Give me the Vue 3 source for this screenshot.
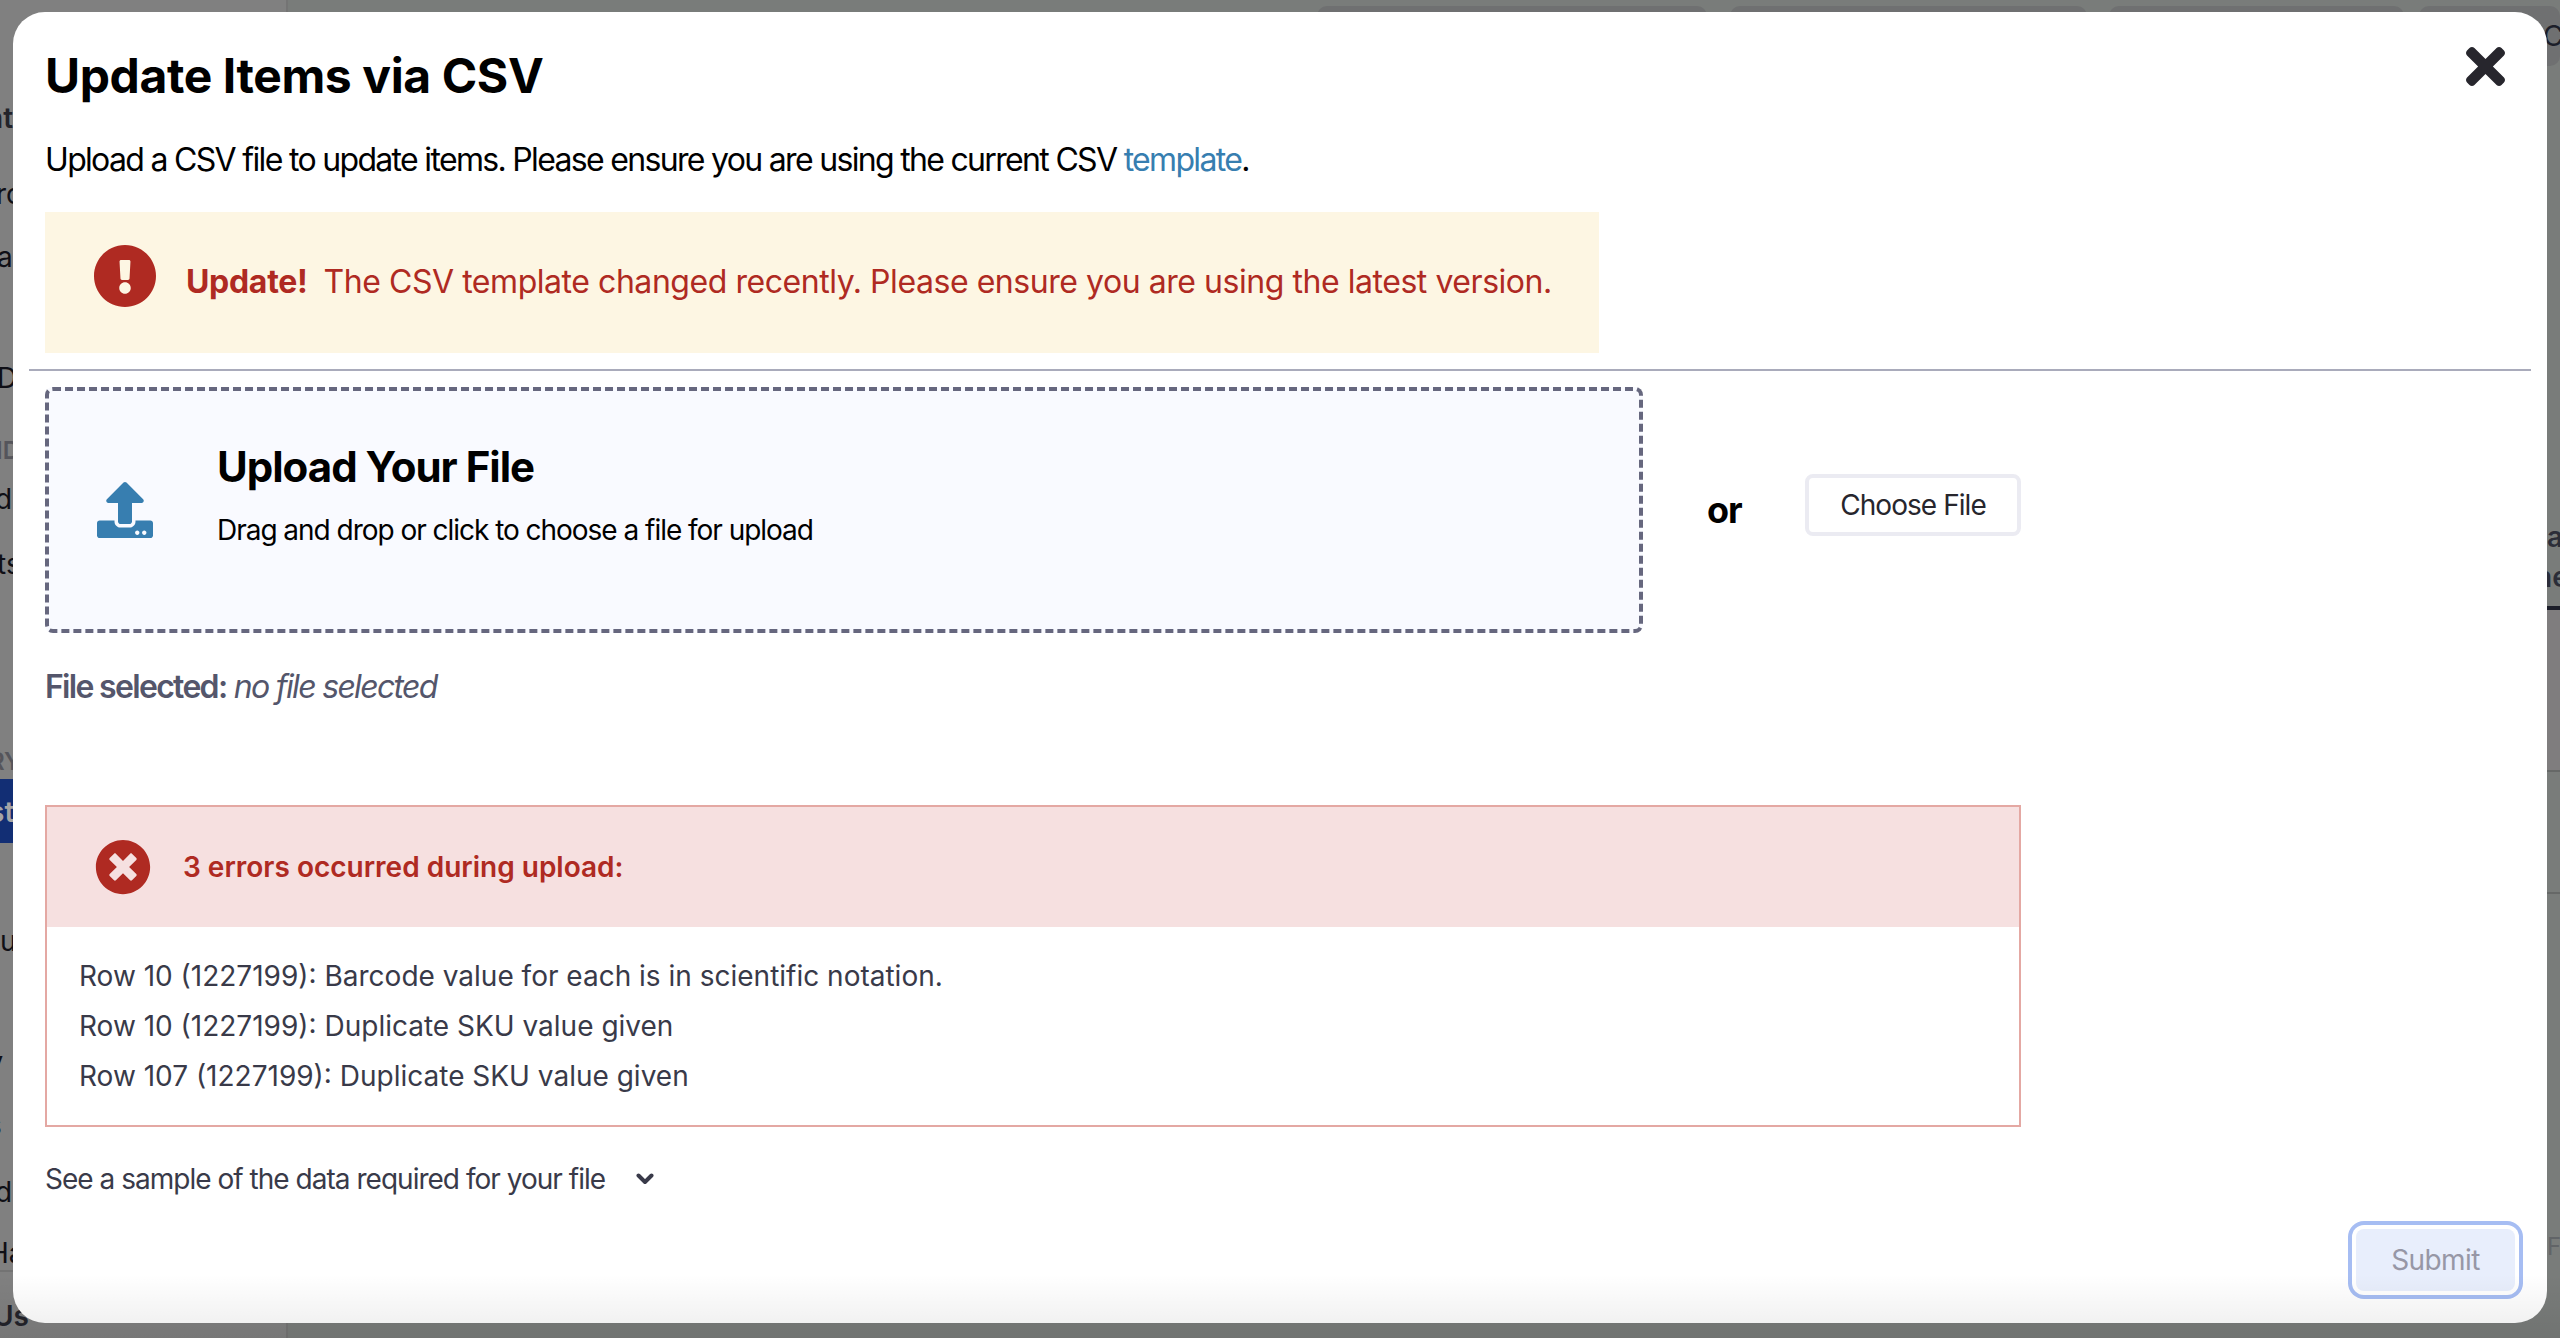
<script setup>
import { ref } from 'vue'

const errors = ref([
  'Row 10 (1227199): Barcode value for each is in scientific notation.',
  'Row 10 (1227199): Duplicate SKU value given',
  'Row 107 (1227199): Duplicate SKU value given'
])

// Sidebar entries behind the dialog: h = row height, x = left shift of the label
const nav = [
  { t: 'nt', h: 135, x: -14, c: 'head' },
  { t: 'ro', h: 76, x: -4 },
  { t: 'a', h: 63, x: -3 },
  { t: 'D', h: 121, x: -3 },
  { t: 'ID', h: 73, x: -4, c: 'group' },
  { t: 'd', h: 48, x: -5 },
  { t: 'ts', h: 65, x: -3 },
  { t: 'RY', h: 198, x: -11, c: 'group' },
  { t: 'st', h: 64, x: -11, c: 'active' },
  { t: 'u', h: 115, x: 0 },
  { t: 'y', h: 121, x: -12.5 },
  { t: 's', h: 63, x: -13 },
  { t: 'd', h: 67, x: -5 },
  { t: 'Ha', h: 63, x: -12, c: 'last' },
  { t: 'Us', h: 61, x: -7, c: 'user' }
]
</script>

<template>
  <div class="screen">
    <div class="backdrop">
      <aside class="sidebar">
        <div v-for="(n, i) in nav" :key="i" class="nav" :class="n.c" :style="{ height: n.h + 'px' }">
          <span :style="{ marginLeft: n.x + 'px' }">{{ n.t }}</span>
        </div>
      </aside>
      <div class="page">
        <div class="toolbar">
          <i class="chip c1"></i><i class="chip c2"></i><i class="chip c3"></i><i class="chip c4">C</i>
        </div>
        <div class="grid">
          <div class="cell th">a<br /><span>ne</span></div>
          <div class="cell r1"></div>
          <div class="cell r2"></div>
          <div class="cell foot">F</div>
        </div>
      </div>
    </div>

    <div class="overlay">
      <section class="modal">
        <button class="close" aria-label="Close">
          <svg viewBox="0 0 352 512"><path d="M242.72 256l100.07-100.07c12.28-12.28 12.28-32.19 0-44.48l-22.24-22.24c-12.28-12.28-32.19-12.28-44.48 0L176 189.28 75.93 89.21c-12.28-12.28-32.19-12.28-44.48 0L9.21 111.45c-12.28 12.28-12.28 32.19 0 44.48L109.28 256 9.21 356.07c-12.28 12.28-12.28 32.19 0 44.48l22.24 22.24c12.28 12.28 32.2 12.28 44.48 0L176 322.72l100.07 100.07c12.28 12.28 32.2 12.28 44.48 0l22.24-22.24c12.28-12.28 12.28-32.19 0-44.48L242.72 256z" /></svg>
        </button>
        <h1>Update Items via CSV</h1>
        <p class="intro">Upload a CSV file to update items. Please ensure you are using the current CSV <a>template</a>.</p>

        <div class="notice">
          <svg viewBox="0 0 512 512"><path d="M504 256c0 136.997-111.043 248-248 248S8 392.997 8 256C8 119.083 119.043 8 256 8s248 111.083 248 248zm-248 50c-25.405 0-46 20.595-46 46s20.595 46 46 46 46-20.595 46-46-20.595-46-46-46zm-43.673-165.346l7.418 136c.347 6.364 5.609 11.346 11.982 11.346h48.546c6.373 0 11.635-4.982 11.982-11.346l7.418-136c.375-6.874-5.098-12.654-11.982-12.654h-63.383c-6.884 0-12.356 5.78-11.981 12.654z" /></svg>
          <strong>Update!</strong>
          <span>The CSV template changed recently. Please ensure you are using the latest version.</span>
        </div>
        <hr />

        <div class="pick">
          <div class="drop">
            <svg viewBox="0 0 512 512"><path d="M296 384h-80c-13.3 0-24-10.7-24-24V192h-87.7c-17.8 0-26.7-21.5-14.1-34.1L242.3 5.7c7.5-7.5 19.8-7.5 27.3 0l152.2 152.2c12.6 12.6 3.7 34.1-14.1 34.1H320v168c0 13.3-10.7 24-24 24zm216-8v112c0 13.3-10.7 24-24 24H24c-13.3 0-24-10.7-24-24V376c0-13.3 10.7-24 24-24h136v8c0 30.9 25.1 56 56 56h80c30.9 0 56-25.1 56-56v-8h136c13.3 0 24 10.7 24 24zm-124 88c0-11-9-20-20-20s-20 9-20 20 9 20 20 20 20-9 20-20zm64 0c0-11-9-20-20-20s-20 9-20 20 9 20 20 20 20-9 20-20z" /></svg>
            <div>
              <h2>Upload Your File</h2>
              <p>Drag and drop or click to choose a file for upload</p>
            </div>
          </div>
          <span class="or">or</span>
          <button class="choose">Choose File</button>
        </div>
        <p class="selected"><b>File selected:</b> <em>no file selected</em></p>

        <div class="errors">
          <header>
            <svg viewBox="0 0 512 512"><path d="M256 8C119 8 8 119 8 256s111 248 248 248 248-111 248-248S393 8 256 8zm121.600 313.100c4.700 4.700 4.700 12.300 0 17L338 377.600c-4.700 4.700-12.300 4.700-17 0L256 312l-65.100 65.600c-4.700 4.700-12.300 4.700-17 0L134.400 338c-4.700-4.700-4.700-12.300 0-17l65.600-65-65.600-65.100c-4.700-4.700-4.700-12.300 0-17l39.600-39.600c4.700-4.700 12.300-4.700 17 0l65 65.700 65.100-65.600c4.700-4.700 12.300-4.700 17 0l39.600 39.600c4.700 4.700 4.700 12.300 0 17L312 256l65.600 65.100z" /></svg>
            <span>3 errors occurred during upload:</span>
          </header>
          <ul>
            <li v-for="e in errors" :key="e">{{ e }}</li>
          </ul>
        </div>

        <div class="sample">
          <span>See a sample of the data required for your file</span>
          <svg viewBox="0 0 18 12"><path d="M2.500 2.500L9 9l6.500-6.500" /></svg>
        </div>
        <button class="submit">Submit</button>
      </section>
    </div>
    <div class="fade"></div>
  </div>
</template>

<style>
body { overflow: hidden; }
</style>

<style scoped>
* { box-sizing: border-box; margin: 0; padding: 0; }
.screen {
  position: relative;
  width: 2560px;
  height: 1338px;
  overflow: hidden;
  font-family: Inter, "Liberation Sans", sans-serif;
  white-space: nowrap;
  color: #000;
}
.backdrop { display: flex; width: 100%; height: 100%; }
.sidebar {
  flex: none;
  width: 288px;
  border-right: 2px solid #747474;
  background: #808080;
  color: #0f0f16;
  font-size: 28px;
  line-height: 34px;
}
.nav { display: flex; align-items: flex-end; }
.head { font-weight: 600; color: #23232a; }
.nav.group { font-size: 24px; font-weight: 600; color: #55555b; }
.nav.active {
  background: #122e74;
  color: #a5a5a5;
  font-weight: 600;
  padding-bottom: 14px;
}
.nav.last { border-bottom: 2px solid #737373; }
.nav.user { font-weight: 600; color: #23232a; }
.page { flex: none; width: 2272px; background: #797c7a; }
.toolbar { display: flex; padding: 6px 0 0 1029px; }
.chip { flex: none; height: 60px; border-radius: 10px; background: #6f7071; }
.c1 { width: 390px; margin-right: 23px; }
.c2 { width: 357px; margin-right: 22px; }
.c3 { width: 295px; margin-right: 15px; }
.c4 { width: 141px; padding-left: 124px; font: normal 28px/60px Inter, sans-serif; color: #1c1e29; }
.grid { display: flex; flex-direction: column; align-items: flex-end; padding-top: 451px; }
.cell { width: 13px; color: #2b2d38; }
.th { height: 93px; border-bottom: 4px solid #1c1e29; font-size: 28px; font-weight: 600; line-height: 40px; }
.th span { margin-left: -12px; }
.r1 { height: 162px; border-bottom: 2px solid #666867; background: #7f7d7e; }
.r2 { height: 122px; border-bottom: 2px solid #666867; }
.foot { height: 390px; padding-top: 331px; font-size: 24px; line-height: 44px; color: #616467; }

.overlay { position: absolute; inset: 12px 13px 15px; }
.modal {
  position: relative;
  display: flex;
  flex-direction: column;
  align-items: flex-start;
  height: 100%;
  padding: 34px 32px 0;
  border-radius: 32px;
  background: #fff;
}
.close {
  position: absolute;
  top: 26px;
  right: 42px;
  width: 39px;
  height: 57px;
  border: 0;
  background: none;
}
.close svg { display: block; width: 100%; height: 100%; fill: #27262d; }
h1 { font-size: 48px; font-weight: 700; line-height: 60px; letter-spacing: -0.4px; }
.intro { margin-top: 34px; font-size: 32px; line-height: 40px; letter-spacing: -1.68px; }
.intro a { color: #377eb0; }
.notice {
  display: flex;
  align-items: center;
  width: 1554px;
  height: 141px;
  margin-top: 32px;
  padding-left: 48px;
  background: #fdf6e3;
  color: #af2a22;
  font-size: 32px;
  line-height: 40px;
}
.notice svg { flex: none; width: 64px; height: 64px; margin: -13px 29px 0 0; fill: currentColor; }
.notice strong { margin-right: 16px; letter-spacing: -0.3px; }
.notice span { letter-spacing: -0.45px; }
.notice strong, .notice span { margin-top: -1px; }
hr { width: 2502px; height: 2px; margin: 16px 0 16px -16px; border: 0; background: #a9abbb; flex: none; }
.pick { display: flex; align-items: center; height: 246px; }
.drop {
  display: flex;
  width: 1598px;
  height: 246px;
  padding: 51px 48px;
  border: 4px dashed #66677e;
  border-radius: 8px;
  background: #f9faff;
}
.drop svg { width: 56px; height: 56px; margin: 40px 64px 0 0; fill: #377eb0; }
h2 { font-size: 42px; font-weight: 700; line-height: 50px; letter-spacing: -1px; }
.drop p { margin-top: 18px; font-size: 28px; line-height: 40px; letter-spacing: -1.03px; }
.or { width: 36px; margin: 0 62px 0 64px; font-size: 36px; font-weight: 700; line-height: 44px; letter-spacing: -1px; }
.choose {
  width: 216px;
  height: 62px;
  margin-top: -10px;
  border: 4px solid #ebebf2;
  border-radius: 8px;
  background: #fff;
  color: #27262d;
  font: 400 28px/54px Inter, sans-serif;
  letter-spacing: -0.95px;
}
.selected { margin-top: 34px; color: #54566b; font-size: 32px; line-height: 40px; letter-spacing: -1.69px; }
.selected b { font-weight: 600; }
.errors { width: 1976px; margin-top: 98px; border: 2px solid #e4a8a3; }
.errors header {
  display: flex;
  align-items: center;
  height: 120px;
  padding-left: 48px;
  background: #f6e0e0;
  color: #af2a22;
  font-size: 28px;
  font-weight: 600;
}
.errors svg { width: 56px; height: 56px; margin-right: 32px; fill: currentColor; }
.errors ul { padding: 24px 32px; list-style: none; color: #393a49; font-size: 28px; line-height: 50px; }
.sample {
  display: flex;
  align-items: center;
  margin-top: 32px;
  color: #393a49;
  font-size: 28px;
  line-height: 40px;
  letter-spacing: -0.98px;
}
.sample svg { width: 18px; height: 12px; margin-left: 31px; fill: none; stroke: currentColor; stroke-width: 4; stroke-linecap: round; stroke-linejoin: round; }
.submit {
  align-self: flex-end;
  width: 159px;
  height: 62px;
  margin: 30px 0 0;
  border: 0;
  border-radius: 8px;
  background: #e8eefc;
  box-shadow: 0 0 0 4px #fff, 0 0 0 8px #a6bdf3;
  color: #9797a6;
  font: 400 28px/62px Inter, sans-serif;
  letter-spacing: -0.6px;
}
.fade {
  position: absolute;
  left: 0;
  right: 0;
  bottom: 0;
  height: 64px;
  background: linear-gradient(rgba(0, 0, 0, 0), rgba(0, 0, 0, 0.07));
  pointer-events: none;
}
</style>
